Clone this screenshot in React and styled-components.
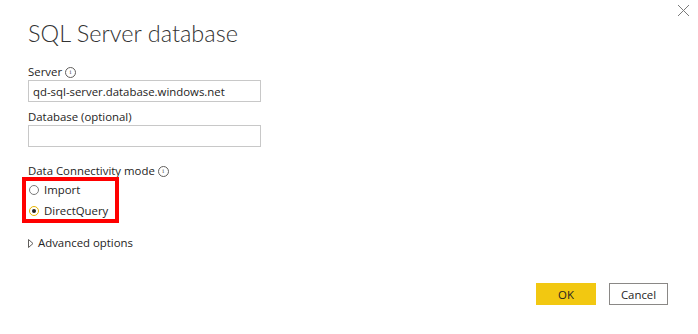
import React, { useState } from "react";
import styled, { createGlobalStyle } from "styled-components";

const GlobalStyle = createGlobalStyle`
  html, body {
    margin: 0;
    padding: 0;
    background: #ffffff;
  }
  body {
    font-family: "Open Sans", "Noto Sans", "Liberation Sans", sans-serif;
    color: #252423;
  }
`;

const Dialog = styled.div`
  position: relative;
  width: 698px;
  height: 334px;
  box-sizing: border-box;
  padding: 17px 28px 0 28px;
  display: flex;
  flex-direction: column;
`;

const CloseButton = styled.button`
  position: absolute;
  top: 3px;
  right: 6px;
  width: 16px;
  height: 16px;
  padding: 0;
  border: none;
  background: none;
  cursor: pointer;
`;

const Title = styled.h1`
  margin: 0;
  font-family: "Lato", "Open Sans", sans-serif;
  font-size: 23.5px;
  font-weight: 300;
  line-height: 32px;
  color: #333333;
`;

const Field = styled.div`
  display: flex;
  flex-direction: column;
  margin-top: ${(p) => p.$top}px;
`;

const Label = styled.label`
  display: flex;
  align-items: center;
  gap: 3px;
  font-size: 11.4px;
  line-height: 16px;
  color: #252423;
  height: 16px;
`;

const InfoIcon = styled.span`
  display: inline-flex;
  align-items: center;
  justify-content: center;
  width: 9px;
  height: 9px;
  border: 1px solid #605e5c;
  border-radius: 50%;
  font-size: 7px;
  line-height: 1;
  color: #605e5c;
  font-family: "Liberation Serif", serif;
`;

const Input = styled.input`
  margin-top: 0;
  width: 233px;
  height: 22px;
  box-sizing: border-box;
  border: 1px solid #c8c8c8;
  padding: 0 4px;
  font-family: inherit;
  font-size: 11.4px;
  color: #252423;
  outline: none;
`;

const RadioGroup = styled.div`
  display: flex;
  flex-direction: column;
  align-self: flex-start;
  width: 97px;
  box-sizing: border-box;
  margin: -2px 0 0 -6px;
  padding: 2px 0 1px 2px;
  border: 4px solid #ff0000;
  gap: 7px;
`;

const RadioRow = styled.label`
  display: flex;
  align-items: center;
  gap: 5px;
  font-size: 11.4px;
  line-height: 14px;
  color: #252423;
  cursor: pointer;
`;

const RadioDot = styled.span`
  width: 10px;
  height: 10px;
  box-sizing: border-box;
  border-radius: 50%;
  border: 1px solid ${(p) => (p.$checked ? "#e8b400" : "#7a7a7a")};
  display: flex;
  align-items: center;
  justify-content: center;
  margin-left: 1px;
  &::after {
    content: "";
    width: 4px;
    height: 4px;
    border-radius: 50%;
    background: ${(p) => (p.$checked ? "#252423" : "transparent")};
  }
`;

const Advanced = styled.div`
  margin-top: 12px;
  display: flex;
  align-items: center;
  gap: 4px;
  font-size: 11.4px;
  line-height: 16px;
  color: #252423;
`;

const Footer = styled.div`
  margin-top: auto;
  margin-bottom: 29px;
  display: flex;
  justify-content: flex-end;
  gap: 13px;
  margin-right: 2px;
`;

const Button = styled.button`
  width: ${(p) => (p.$primary ? 60 : 59)}px;
  height: 22px;
  box-sizing: border-box;
  border: 1px solid ${(p) => (p.$primary ? "#f2c811" : "#8a8886")};
  background: ${(p) => (p.$primary ? "#f2c811" : "#ffffff")};
  font-family: inherit;
  font-size: 11.4px;
  color: #252423;
  padding: 0;
`;

export default function App() {
  const [mode, setMode] = useState("direct");
  return (
    <>
      <GlobalStyle />
      <Dialog>
        <CloseButton aria-label="Close">
          <svg width="16" height="16" viewBox="0 0 16 16">
            <path d="M2 2 L13 13 M13 2 L2 13" stroke="#7a7a7a" strokeWidth="1" fill="none" />
          </svg>
        </CloseButton>
        <Title>SQL Server database</Title>
        <Field $top={15}>
          <Label>
            Server <InfoIcon>i</InfoIcon>
          </Label>
          <Input defaultValue="qd-sql-server.database.windows.net" />
        </Field>
        <Field $top={7}>
          <Label>Database (optional)</Label>
          <Input defaultValue="" />
        </Field>
        <Field $top={16}>
          <Label>
            Data Connectivity mode <InfoIcon>i</InfoIcon>
          </Label>
        </Field>
        <RadioGroup>
          <RadioRow onClick={() => setMode("import")}>
            <RadioDot $checked={mode === "import"} />
            Import
          </RadioRow>
          <RadioRow onClick={() => setMode("direct")}>
            <RadioDot $checked={mode === "direct"} />
            DirectQuery
          </RadioRow>
        </RadioGroup>
        <Advanced>
          <svg width="6" height="9" viewBox="0 0 6 9">
            <path d="M0.5 0.5 L5 4.5 L0.5 8.5 Z" stroke="#605e5c" fill="none" strokeWidth="1" />
          </svg>
          Advanced options
        </Advanced>
        <Footer>
          <Button $primary>OK</Button>
          <Button>Cancel</Button>
        </Footer>
      </Dialog>
    </>
  );
}
